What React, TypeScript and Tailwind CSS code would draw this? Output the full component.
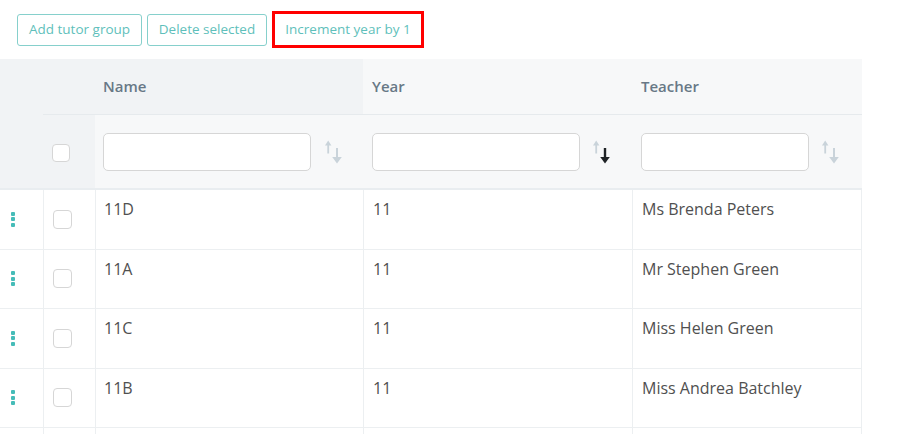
import React from "react";

const rows = [
  { name: "11D", year: "11", teacher: "Ms Brenda Peters" },
  { name: "11A", year: "11", teacher: "Mr Stephen Green" },
  { name: "11C", year: "11", teacher: "Miss Helen Green" },
  { name: "11B", year: "11", teacher: "Miss Andrea Batchley" },
  { name: "", year: "", teacher: "" },
];

function SortIcon({ active }: { active?: boolean }) {
  const up = "#c9d3da";
  const down = active ? "#1f2326" : "#c9d3da";
  return (
    <svg width="17" height="24" viewBox="0 0 17 24" className="shrink-0">
      <polygon points="0,5.5 3.2,0.5 6.4,5.5" fill={up} />
      <rect x="2.3" y="4" width="1.8" height="9.5" fill={up} />
      <rect x={active ? "10.8" : "11"} y="8" width={active ? "2.4" : "2"} height="9.5" fill={down} />
      <polygon points="7.2,17 12,23.5 16.8,17" fill={down} />
    </svg>
  );
}

function Checkbox() {
  return <div className="w-[19px] h-[19px] rounded-[4px] border-[1.5px] border-[#d6d6d6] bg-white" />;
}

function Handle() {
  return (
    <div className="flex flex-col gap-[1.5px]">
      <div className="w-[4px] h-[4px] rounded-[1px] bg-[#46bcb8]" />
      <div className="w-[4px] h-[4px] rounded-[1px] bg-[#46bcb8]" />
      <div className="w-[4px] h-[4px] rounded-[1px] bg-[#46bcb8]" />
    </div>
  );
}

export default function App() {
  return (
    <div className="w-[903px] h-[434px] overflow-hidden bg-white font-['Open_Sans',sans-serif]">
      <div className="flex items-center gap-[5px] pl-[17px] pt-[11px]">
        <button className="w-[125px] h-[32px] rounded-[3px] border border-[#86d0cc] text-[13.5px] text-[#5fbfbb] bg-white">
          Add tutor group
        </button>
        <button className="w-[120px] h-[32px] rounded-[3px] border border-[#86d0cc] text-[13.5px] text-[#5fbfbb] bg-white">
          Delete selected
        </button>
        <button className="w-[152px] h-[37px] border-[3px] border-[#ff0000] text-[13.5px] text-[#5fbfbb] bg-white">
          Increment year by 1
        </button>
      </div>

      <div className="mt-[11px] w-[862px] grid grid-cols-[43px_52px_268px_269px_230px] text-[15px]">
        {/* header row 1 */}
        <div className="row-span-2 bg-[#f1f3f5] border-b-2 border-[#e9edf0]" />
        <div className="h-[56px] bg-[#f1f3f5] border-b border-[#e6eaed]" />
        <div className="h-[56px] bg-[#f1f3f5] border-b border-[#e6eaed] flex items-center pl-[8px] font-semibold text-[#687886]">
          Name
        </div>
        <div className="h-[56px] bg-[#f7f8f9] border-b border-[#e6eaed] flex items-center pl-[9px] font-semibold text-[#687886]">
          Year
        </div>
        <div className="h-[56px] bg-[#f7f8f9] border-b border-[#e6eaed] flex items-center pl-[9px] font-semibold text-[#687886]">
          Teacher
        </div>

        {/* filter row */}
        <div className="h-[75px] bg-[#f1f3f5] border-b-2 border-[#e9edf0] flex items-center pl-[9px] pt-[3px]">
          <div className="w-[18px] h-[18px] rounded-[4px] border-[1.5px] border-[#d6d6d6] bg-white" />
        </div>
        <div className="h-[75px] bg-[#f7f8f9] border-b-2 border-[#e9edf0] flex items-center pl-[8px] gap-[14px]">
          <div className="w-[208px] h-[38px] rounded-[5px] border-[1.5px] border-[#d6d6d6] bg-white" />
          <SortIcon />
        </div>
        <div className="h-[75px] bg-[#f7f8f9] border-b-2 border-[#e9edf0] flex items-center pl-[9px] gap-[13px]">
          <div className="w-[208px] h-[38px] rounded-[5px] border-[1.5px] border-[#d6d6d6] bg-white" />
          <SortIcon active />
        </div>
        <div className="h-[75px] bg-[#f7f8f9] border-b-2 border-[#e9edf0] flex items-center pl-[9px] gap-[13px]">
          <div className="w-[168px] h-[38px] rounded-[5px] border-[1.5px] border-[#d6d6d6] bg-white" />
          <SortIcon />
        </div>

        {/* body rows */}
        {rows.map((r, i) => (
          <React.Fragment key={i}>
            <div className="h-[59.5px] border-b border-[#eceff1] flex items-center pl-[11px]">
              {r.name && <Handle />}
            </div>
            <div className="h-[59.5px] border-b border-l border-[#eceff1] flex items-center pl-[9px]">
              {r.name && <Checkbox />}
            </div>
            <div className="h-[59.5px] border-b border-l border-[#eceff1] pl-[8px] pt-[8px] text-[16px] text-[#505050] leading-[22px]">
              {r.name}
            </div>
            <div className="h-[59.5px] border-b border-l border-[#eceff1] pl-[9px] pt-[8px] text-[16px] text-[#505050] leading-[22px]">
              {r.year}
            </div>
            <div className="h-[59.5px] border-b border-l border-r border-[#eceff1] pl-[9px] pt-[8px] text-[16px] text-[#505050] leading-[22px]">
              {r.teacher}
            </div>
          </React.Fragment>
        ))}
      </div>
    </div>
  );
}
